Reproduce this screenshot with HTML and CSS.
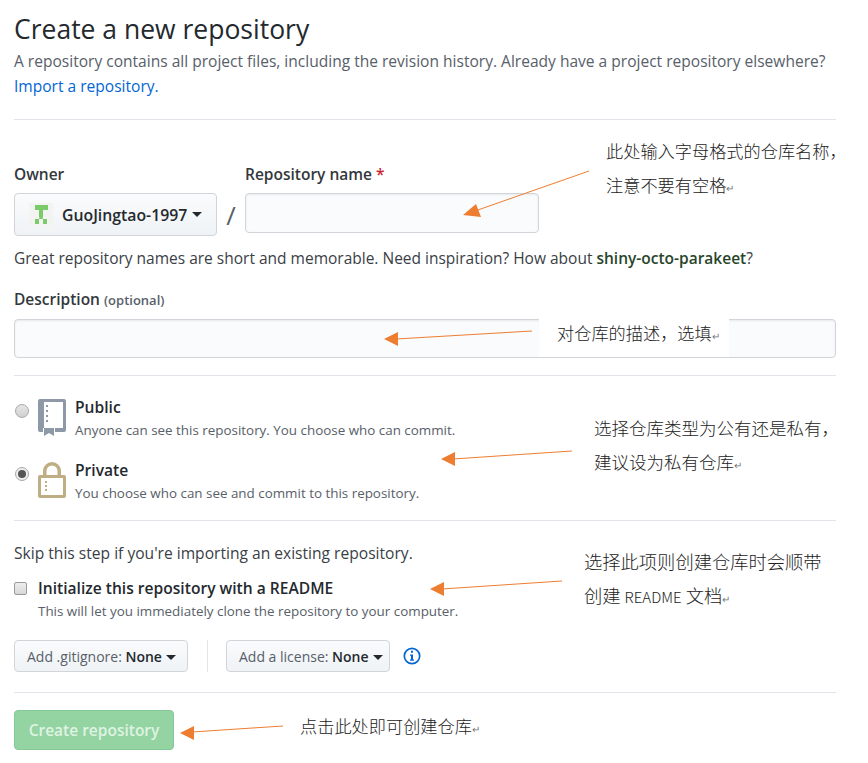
FILE: index.html
```html
<!DOCTYPE html>
<html lang="zh">
<head>
  <meta charset="UTF-8">
  <title>Create a new repository</title>
  <link rel="stylesheet" href="styles.css">
</head>
<body>
  <main class="page">
    <h1 class="title">Create a new repository</h1>
    <p class="lead">A repository contains all project files, including the revision history. Already have a project repository elsewhere? <a href="#">Import a repository.</a></p>
    <hr class="rule rule-top">

    <div class="owner-row">
      <div class="field">
        <div class="label">Owner</div>
        <button class="owner-btn">
          <svg class="avatar" width="24" height="24" viewBox="0 0 24 24">
            <rect width="24" height="24" fill="#f3f4f2"/>
            <path d="M6 2h13v5H6zM10 7h4v7h-4zM10.500 14h3L14 16h4v5h-4v-5h-4v5H6v-5h4z" fill="#7ccb6a"/>
          </svg>
          GuoJingtao-1997<span class="caret"></span>
        </button>
      </div>
      <div class="slash">/</div>
      <div class="field">
        <div class="label">Repository name <span class="req">*</span></div>
        <div class="input input-name"></div>
      </div>
    </div>
    <p class="hint">Great repository names are short and memorable. Need inspiration? How about <b class="suggest">shiny-octo-parakeet</b>?</p>

    <div class="label label-desc">Description <span class="opt">(optional)</span></div>
    <div class="input input-desc"></div>
    <hr class="rule rule-desc">

    <div class="choice choice-public">
      <span class="radio"></span>
      <svg class="repo-icon" width="28" height="37" viewBox="0 0 28 37">
        <path d="M2 0h24a2 2 0 0 1 2 2v29a2 2 0 0 1-2 2h-9v-4h8V3H6v26h-1v4H2a2 2 0 0 1-2-2V2a2 2 0 0 1 2-2z" fill="#8d99a6"/>
        <path d="M8 6h2v2H8zM8 11h2v2H8zM8 16h2v2H8zM8 21h2v2H8z" fill="#8d99a6"/>
        <path d="M6 29h10v8l-5-3-5 3z" fill="#8d99a6"/>
      </svg>
      <div>
        <div class="choice-name">Public</div>
        <div class="note">Anyone can see this repository. You choose who can commit.</div>
      </div>
    </div>
    <div class="choice choice-private">
      <span class="radio radio-on"></span>
      <svg class="repo-icon" width="28" height="37" viewBox="0 0 28 37">
        <path d="M5 14V9a9 9 0 0 1 18 0v5h-3.500V9a5.500 5.500 0 0 0-11 0v5z" fill="#bfae84"/>
        <path d="M2 13h24a2 2 0 0 1 2 2v19a2 2 0 0 1-2 2H2a2 2 0 0 1-2-2V15a2 2 0 0 1 2-2zm1 3v17h22V16z" fill="#bfae84"/>
        <path d="M7 19h2v2H7zM7 23h2v2H7zM7 27h2v2H7z" fill="#bfae84"/>
      </svg>
      <div>
        <div class="choice-name">Private</div>
        <div class="note">You choose who can see and commit to this repository.</div>
      </div>
    </div>
    <hr class="rule rule-choice">

    <p class="skip">Skip this step if you're importing an existing repository.</p>
    <div class="readme">
      <span class="check"></span>
      <div>
        <div class="choice-name">Initialize this repository with a README</div>
        <div class="note">This will let you immediately clone the repository to your computer.</div>
      </div>
    </div>

    <div class="add-row">
      <button class="add-btn add-ignore">Add .gitignore: <b>None</b><span class="caret"></span></button>
      <span class="add-sep"></span>
      <button class="add-btn add-license">Add a license: <b>None</b><span class="caret"></span></button>
      <svg class="info" width="18" height="18" viewBox="0 0 18 18">
        <circle cx="9" cy="9" r="7.700" fill="none" stroke="#0366d6" stroke-width="1.700"/>
        <path d="M8 3.800h2v2H8zM7 7.500h3v5h1v1.300H7v-1.300h1V8.800H7z" fill="#0366d6"/>
      </svg>
    </div>
    <hr class="rule rule-add">

    <button class="create-btn">Create repository</button>
  </main>

  <!-- annotations drawn over the screenshot -->
  <svg class="arrows" width="868" height="763" viewBox="0 0 868 763">
    <g stroke="#ed7d31" stroke-width="1" fill="#ed7d31">
      <line x1="589" y1="171" x2="475" y2="211"/>
      <polygon points="463,215 476,204 481,217" stroke="none"/>
      <line x1="532" y1="331" x2="396" y2="339"/>
      <polygon points="384,339 398,332 398,346" stroke="none"/>
      <line x1="572" y1="451" x2="453" y2="459"/>
      <polygon points="441,459 455,452 455,466" stroke="none"/>
      <line x1="562" y1="581" x2="442" y2="589"/>
      <polygon points="430,589 444,582 444,596" stroke="none"/>
      <line x1="283" y1="726" x2="192" y2="732"/>
      <polygon points="180,733 194,726 194,740" stroke="none"/>
    </g>
  </svg>
  <div class="callout callout-name">此处输入字母格式的仓库名称，<br>注意不要有空格<i>↵</i></div>
  <div class="callout callout-desc">对仓库的描述，选填<i>↵</i></div>
  <div class="callout callout-type">选择仓库类型为公有还是私有，<br>建议设为私有仓库<i>↵</i></div>
  <div class="callout callout-readme">选择此项则创建仓库时会顺带<br>创建 <span class="latin">README</span> 文档<i>↵</i></div>
  <div class="callout callout-create">点击此处即可创建仓库<i>↵</i></div>
</body>
</html>
```

FILE: styles.css
```css
* {
  box-sizing: border-box;
}

body {
  margin: 0;
  background: #fff;
  color: #24292e;
  font-family: "Open Sans", "Liberation Sans", sans-serif;
  overflow: hidden;
}

.page {
  width: 822px;
  margin-left: 14px;
  height: 763px;
}

.title {
  margin: 0;
  padding-top: 11px;
  font-size: 26.500px;
  line-height: 36px;
  font-weight: 400;
}

.lead {
  margin: 2px 0 0;
  font-size: 15.550px;
  line-height: 25px;
  color: #586069;
}

.lead a {
  color: #0366d6;
  text-decoration: none;
}

.rule {
  margin: 0;
  border: 0;
  border-top: 1px solid #e1e4e8;
}

.rule-top {
  margin-top: 20px;
}

.owner-row {
  display: flex;
  margin-top: 44px;
}

.label {
  font-size: 15.500px;
  line-height: 20px;
  font-weight: 600;
  margin-bottom: 9px;
  color: #33383d;
}

.req {
  color: #cb2431;
}

.owner-btn {
  display: flex;
  align-items: center;
  width: 203px;
  height: 43px;
  padding: 0 0 0 14px;
  border: 1px solid #d1d5da;
  border-radius: 4px;
  background: linear-gradient(#fafbfc, #eff3f6);
  color: #24292e;
  font: 600 15.800px "Open Sans", sans-serif;
}

.avatar {
  margin-right: 9px;
}

.caret {
  display: inline-block;
  margin-left: 5px;
  border-top: 5px solid #24292e;
  border-left: 5px solid transparent;
  border-right: 5px solid transparent;
  vertical-align: 2px;
}

.slash {
  width: 28px;
  padding-top: 33px;
  text-align: center;
  font-size: 26px;
  color: #586069;
}

.input {
  border: 1px solid #d1d5da;
  border-radius: 4px;
  background: #fafbfc;
  box-shadow: inset 0 1px 2px rgba(27, 31, 35, 0.075);
}

.input-name {
  width: 294px;
  height: 40px;
}

.hint {
  margin: 11px 0 0;
  font-size: 15.500px;
  line-height: 22px;
  color: #3a4046;
}

.suggest {
  color: #28452a;
  font-weight: 600;
}

.label-desc {
  margin: 20px 0 9px;
}

.opt {
  font-size: 13px;
  color: #586069;
}

.input-desc {
  height: 39px;
}

.rule-desc {
  margin-top: 17px;
}

.choice {
  display: flex;
  align-items: flex-start;
}

.choice-public {
  margin-top: 22px;
}

.choice-private {
  margin-top: 22px;
}

.radio {
  flex: none;
  width: 14px;
  height: 14px;
  margin: 6px 2px 0 1px;
  border: 1px solid #a8a8a8;
  border-radius: 50%;
  background: linear-gradient(#e6e6e6, #d0d0d0);
}

.radio-on {
  position: relative;
  background: #eee;
}

.radio-on::after {
  content: "";
  position: absolute;
  left: 2px;
  top: 2px;
  width: 8px;
  height: 8px;
  border-radius: 50%;
  background: #555;
}

.repo-icon {
  flex: none;
  margin: 1px 9px 0 7px;
}

.choice-name {
  font-size: 15.600px;
  line-height: 20px;
  font-weight: 600;
  margin-top: -1px;
}

.note {
  font-size: 13.400px;
  line-height: 18px;
  margin-top: 4px;
  color: #586069;
}

.rule-choice {
  margin-top: 18px;
}

.skip {
  margin: 22px 0 0;
  font-size: 15.600px;
  line-height: 20px;
  color: #3a4046;
}

.readme {
  display: flex;
  align-items: flex-start;
  margin-top: 16px;
}

.check {
  flex: none;
  width: 13px;
  height: 13px;
  margin: 3px 11px 0 0;
  border: 1px solid #9a9a9a;
  border-radius: 2px;
  background: linear-gradient(#eee, #d8d8d8);
}

.add-row {
  display: flex;
  align-items: center;
  margin-top: 20px;
}

.add-btn {
  height: 32px;
  padding: 0 0 0 12px;
  border: 1px solid #d1d5da;
  border-radius: 4px;
  background: linear-gradient(#fafbfc, #eff3f6);
  color: #586069;
  font: 400 14px "Open Sans", sans-serif;
  text-align: left;
  white-space: nowrap;
}

.add-ignore {
  width: 174px;
}

.add-license {
  width: 164px;
}

.add-btn b {
  color: #24292e;
  font-weight: 600;
}

.add-btn .caret {
  margin-left: 4px;
}

.add-sep {
  width: 1px;
  height: 32px;
  margin: 0 18px 0 19px;
  background: #e1e4e8;
}

.info {
  margin-left: 13px;
}

.rule-add {
  margin-top: 20px;
}

.create-btn {
  display: block;
  width: 160px;
  height: 40px;
  margin-top: 17px;
  border: 1px solid #84c997;
  border-radius: 4px;
  background: #94d3a2;
  color: #dff3e3;
  font: 600 15.500px "Open Sans", sans-serif;
}

/* overlay annotations */
.arrows {
  position: absolute;
  left: 0;
  top: 0;
}

.callout {
  position: absolute;
  font-family: "Noto Sans CJK SC", sans-serif;
  font-weight: 300;
  font-size: 17.200px;
  line-height: 34px;
  color: #222;
  white-space: nowrap;
}

.callout i {
  font-style: normal;
  font-size: 10px;
  color: #777;
}

.latin {
  font-size: 15px;
}

.callout-name {
  left: 606px;
  top: 134px;
}

.callout-desc {
  left: 539px;
  top: 315px;
  width: 190px;
  height: 42px;
  padding: 1px 0 0 18px;
  background: #fff;
}

.callout-type {
  left: 594px;
  top: 411px;
  font-size: 17.500px;
}

.callout-readme {
  left: 584px;
  top: 544px;
  font-size: 18.300px;
}

.callout-create {
  left: 300px;
  top: 709px;
}
```
